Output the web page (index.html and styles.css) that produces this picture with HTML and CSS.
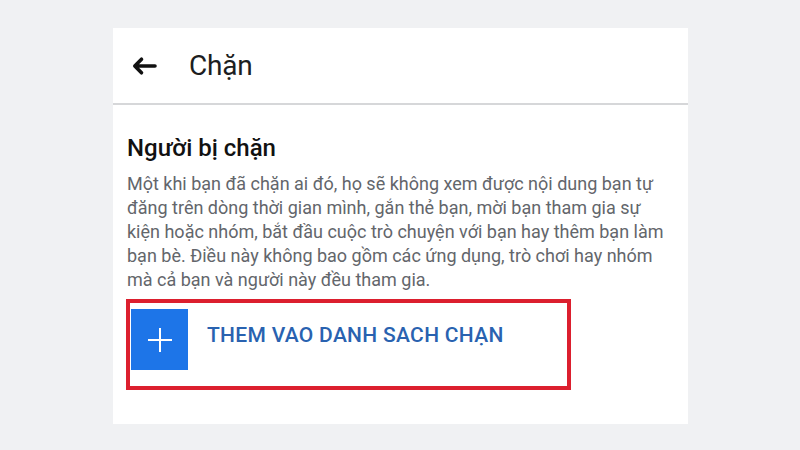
FILE: index.html
```html
<!DOCTYPE html>
<html lang="vi">
<head>
<meta charset="utf-8">
<link rel="stylesheet" href="styles.css">
</head>
<body>
<div class="panel">
  <div class="header">
    <svg class="back" width="26" height="20" viewBox="0 0 26 20"><path d="M24 10H4M10.5 3.2 3.8 10 10.5 16.8" fill="none" stroke="#111" stroke-width="3.6" stroke-linecap="round" stroke-linejoin="round"/></svg>
    <span class="title">Chặn</span>
  </div>
  <div class="content">
    <h2 class="heading">Người bị chặn</h2>
    <p class="desc">Một khi bạn đã chặn ai đó, họ sẽ không xem được nội dung bạn tự đăng trên dòng thời gian mình, gắn thẻ bạn, mời bạn tham gia sự kiện hoặc nhóm, bắt đầu cuộc trò chuyện với bạn hay thêm bạn làm bạn bè. Điều này không bao gồm các ứng dụng, trò chơi hay nhóm mà cả bạn và người này đều tham gia.</p>
    <div class="addbox">
      <div class="plus"><svg width="26" height="26" viewBox="0 0 26 26"><path d="M13 1v24M1 13h24" stroke="#fff" stroke-width="2"/></svg></div>
      <span class="addtext">THEM VAO DANH SACH CHẠN</span>
    </div>
  </div>
</div>
</body>
</html>
```
FILE: styles.css
```css
html, body { margin: 0; padding: 0; }
body {
  background: #f0f1f3;
  font-family: Roboto, "Noto Sans", sans-serif;
  width: 800px;
  height: 450px;
  overflow: hidden;
}
.panel {
  margin: 28px 0 0 113px;
  width: 575px;
  height: 396px;
  background: #fff;
}
.header {
  height: 75px;
  border-bottom: 2px solid #d6d7d9;
  display: flex;
  align-items: center;
  padding-left: 18px;
}
.back { margin-right: 32px; }
.title {
  font-size: 28px;
  color: #1c1e21;
  letter-spacing: -0.2px;
}
.content { padding: 28px 0 0 13px; }
.heading {
  margin: 0 0 0 1px;
  font-size: 24px;
  font-weight: 500;
  color: #111;
  line-height: 30px;
}
.desc {
  margin: 9px 0 0 1px;
  width: 548px;
  font-size: 18px;
  line-height: 24px;
  color: #63666b;
}
.addbox {
  margin-top: 7px;
  width: 437px;
  height: 83px;
  border: 4px solid #dc1f2e;
  display: flex;
  align-items: flex-start;
}
.plus {
  margin: 6px 0 0 1px;
  width: 57px;
  height: 61px;
  background: #1d75e8;
  display: flex;
  align-items: center;
  justify-content: center;
}
.addtext {
  margin: 20px 0 0 19px;
  font-size: 21px;
  font-weight: 500;
  color: #2962b0;
  letter-spacing: 0.3px;
}
```
